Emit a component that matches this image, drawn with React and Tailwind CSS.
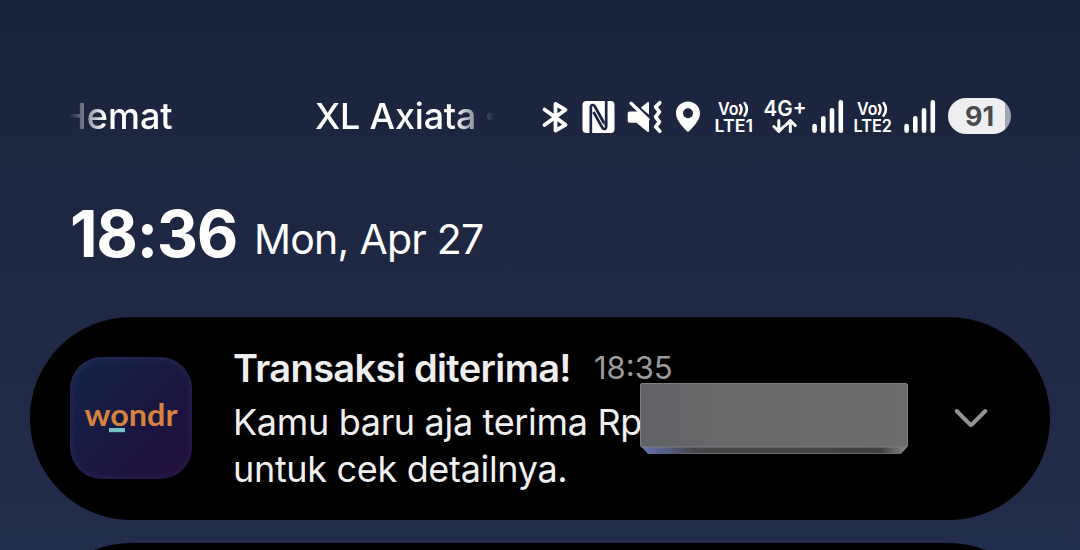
import React from 'react';

function BluetoothIcon() {
  return (
    <svg width="30" height="40" viewBox="0 0 30 40" fill="none" stroke="#fff" strokeWidth="3.8" strokeLinecap="round" strokeLinejoin="round">
      <path d="M4.5 13.5 L25.5 28.8 L15.5 34.6 V8 L25.5 13.8 L4.5 29" />
    </svg>
  );
}

function NfcIcon() {
  return (
    <svg width="34" height="40" viewBox="0 0 34 40" fill="none">
      <rect x="1.5" y="5" width="32" height="32" rx="4" fill="#fff" />
      <path d="M9.8 37.5 V11.5 Q9.8 8.8 12 9 Q13.2 9.2 14 10.6 L23 27 M25.2 4.5 V30 Q25.2 33.2 23 33 Q21.8 32.8 21 31.2 L12.5 16" stroke="#1c2540" strokeWidth="2.7" />
      <path d="M14.5 10 L23.6 26 V30 L12.8 11 Z" fill="#1c2540" />
    </svg>
  );
}

function MuteVibrateIcon() {
  return (
    <svg width="38" height="40" viewBox="0 0 38 40" fill="none">
      <path d="M4.5 15.5 H14 L24 24 V34.5 Q24 37 22 35.5 L11.5 26.8 H4.5 Q2.7 26.8 2.7 25 V17.3 Q2.7 15.5 4.5 15.5 Z" fill="#fff" />
      <path d="M15.8 11.8 L22 6.4 Q24 4.8 24 7.4 V18.8 Z" fill="#fff" />
      <path d="M6 7.3 L23 23.5" stroke="#fff" strokeWidth="3.4" strokeLinecap="round" />
      <path d="M34.8 6.8 L30.6 10.8 L34.4 15.8 L30.6 20.8 L34.4 25.8 L30.6 30.8 L34.8 35.2" stroke="#fff" strokeWidth="3.7" strokeLinecap="round" strokeLinejoin="round" />
    </svg>
  );
}

function LocationIcon() {
  return (
    <svg width="26" height="40" viewBox="0 0 26 40">
      <path fillRule="evenodd" fill="#fff" d="M13 5.5 C19.7 5.5 25 10.5 25 17 C25 24 19.5 29.5 14.6 34.8 Q13 36.6 11.4 34.8 C6.5 29.5 1 24 1 17 C1 10.5 6.3 5.5 13 5.5 Z M13 12.2 A5 5 0 1 0 13 22.2 A5 5 0 1 0 13 12.2 Z" />
    </svg>
  );
}

function VolteIcon({ sim }) {
  return (
    <svg width="42" height="40" viewBox="0 0 42 40" fill="#fff" fontFamily="Inter, sans-serif" fontWeight="600">
      <text x="5" y="18.8" fontSize="16.8" textLength="20.5" lengthAdjust="spacingAndGlyphs">Vo</text>
      <path d="M27 9 Q30 13.2 27 17.8 M31.6 7 Q36.2 13 31.6 19.6" fill="none" stroke="#fff" strokeWidth="2.6" strokeLinecap="round" />
      <text x="1.5" y="36" fontSize="17" textLength="38.5" lengthAdjust="spacingAndGlyphs">LTE{sim}</text>
    </svg>
  );
}

function DataIcon() {
  return (
    <svg width="44" height="40" viewBox="0 0 44 40" fill="none">
      <text x="0.5" y="19.8" fontSize="21.5" fontWeight="600" fontFamily="Inter, sans-serif" fill="#fff" textLength="43" lengthAdjust="spacingAndGlyphs">4G+</text>
      <path d="M15.8 24.5 V35 M10.8 30.5 L15.8 35.3 L20.8 30.5 M27.3 35.5 V25 M22.3 29.5 L27.3 24.7 L32.3 29.5" stroke="#fff" strokeWidth="3" strokeLinecap="round" strokeLinejoin="round" />
    </svg>
  );
}

function SignalIcon() {
  return (
    <svg width="34" height="40" viewBox="0 0 34 40" stroke="#fff" strokeWidth="4.6" strokeLinecap="round">
      <path d="M3.6 30 V34.7 M12.3 22.2 V34.7 M21 14.2 V34.7 M29.8 6.4 V34.7" />
    </svg>
  );
}

function StatusBar() {
  return (
    <div className="flex h-10 items-start text-[36px] leading-10 text-white">
      <div className="ml-[69px] flex w-[425px] overflow-hidden whitespace-nowrap mask-[linear-gradient(to_right,transparent,#000_36px,#000_385px,transparent)]">
        <span className="-ml-[9px] w-[255px] font-[450]">Hemat</span>
        <span className="w-[166px] font-[450] tracking-[-0.2px]">XL Axiata</span>
        <span className="ml-[6px] mt-[17px] h-[7px] w-[7px] shrink-0 rounded-full bg-white" />
      </div>
      <div className="ml-[46px] flex">
        <BluetoothIcon />
        <div className="ml-[11px]"><NfcIcon /></div>
        <div className="ml-[10px]"><MuteVibrateIcon /></div>
        <div className="ml-[12px]"><LocationIcon /></div>
        <div className="ml-[12px]"><VolteIcon sim="1" /></div>
        <div className="ml-[8px]"><DataIcon /></div>
        <div className="ml-[4px]"><SignalIcon /></div>
        <div className="ml-[7px]"><VolteIcon sim="2" /></div>
        <div className="ml-[9px]"><SignalIcon /></div>
        <div className="mt-[2px] ml-[11px] flex h-9 w-[63px] items-center justify-center rounded-full bg-linear-to-r from-[#eeeff3] from-90% to-[#a2a6b3] to-90% pt-[2px] text-[27px] font-bold leading-[34px] text-[#4b4b4d]">
          91
        </div>
      </div>
    </div>
  );
}

function WondrLogo() {
  return (
    <svg width="122" height="122" viewBox="0 0 122 122">
      <text x="14.5" y="68.8" fontFamily="Lato, sans-serif" fontWeight="700" fontSize="31" fill="#d5833f" textLength="93" lengthAdjust="spacingAndGlyphs">
        wondr
      </text>
      <rect x="39" y="71" width="16" height="4.2" fill="#76c1c4" />
    </svg>
  );
}

function RedactedAmount() {
  return (
    <svg className="absolute top-[66px] left-[610px]" width="269" height="72" viewBox="0 0 269 72">
      <defs>
        <linearGradient id="face" x1="0" x2="1">
          <stop offset="0" stopColor="#626367" />
          <stop offset="0.3" stopColor="#68686a" />
          <stop offset="1" stopColor="#6c6c6d" />
        </linearGradient>
        <linearGradient id="edge" x1="0" x2="1">
          <stop offset="0" stopColor="#6474b4" />
          <stop offset="0.2" stopColor="#464649" />
          <stop offset="0.9" stopColor="#414141" />
          <stop offset="1" stopColor="#8a8a8a" />
        </linearGradient>
      </defs>
      <path d="M0.5 63 H268 L261 71 H8 Z" fill="url(#edge)" />
      <path d="M40 70.5 H261" stroke="#6a6a6a" strokeWidth="1" />
      <rect x="0.5" y="0.5" width="267" height="63.5" rx="1.5" fill="url(#face)" stroke="#7e7f83" />
    </svg>
  );
}

function NotificationCard() {
  return (
    <div className="relative mx-[30px] mt-[52px] flex h-[203px] shrink-0 rounded-[101px] bg-black">
      <div className="mt-10 ml-10 h-[122px] w-[122px] shrink-0 rounded-[32px] bg-linear-to-br from-[#132449] via-[#191840] to-[#200b3a] shadow-[inset_0_0_8px_rgba(120,130,170,0.2)]">
        <WondrLogo />
      </div>
      <div className="ml-[41px] w-[700px] whitespace-nowrap pt-[27px]">
        <div className="flex h-[55px] leading-[48px]">
          <span className="w-[361px] text-[38px] font-semibold tracking-[-0.65px] text-[#efefef]">Transaksi diterima!</span>
          <span className="text-[31px] text-[#9b9b9b]">18:35</span>
        </div>
        <p className="text-[36px] leading-[47px] tracking-[-0.33px] text-[#efefef]">
          Kamu baru aja terima Rp
          <br />
          untuk cek detailnya.
        </p>
      </div>
      <svg className="mt-[90px] ml-[20px]" width="36" height="22" viewBox="0 0 36 22" fill="none" stroke="#949494" strokeWidth="4" strokeLinecap="round" strokeLinejoin="round">
        <path d="M3.7 4 L17 17.3 Q18 18.3 19 17.3 L32.3 4" />
      </svg>
      <RedactedAmount />
    </div>
  );
}

export default function App() {
  return (
    <div className="flex h-[550px] w-[1080px] flex-col overflow-hidden bg-linear-to-b from-[#1b233b] to-[#222d4b] pt-24 font-['Inter',sans-serif]">
      <StatusBar />
      <div className="mt-[65px] ml-[70px] flex h-16 whitespace-nowrap leading-[66px] text-white">
        <span className="w-[184px] text-[64px] font-bold tracking-[-1.3px]">18:36</span>
        <span className="pt-[5px] text-[41px] tracking-[-0.75px]">Mon, Apr 27</span>
      </div>
      <NotificationCard />
      <div className="mx-[30px] mt-[23px] h-[203px] shrink-0 rounded-[101px] bg-black" />
    </div>
  );
}
